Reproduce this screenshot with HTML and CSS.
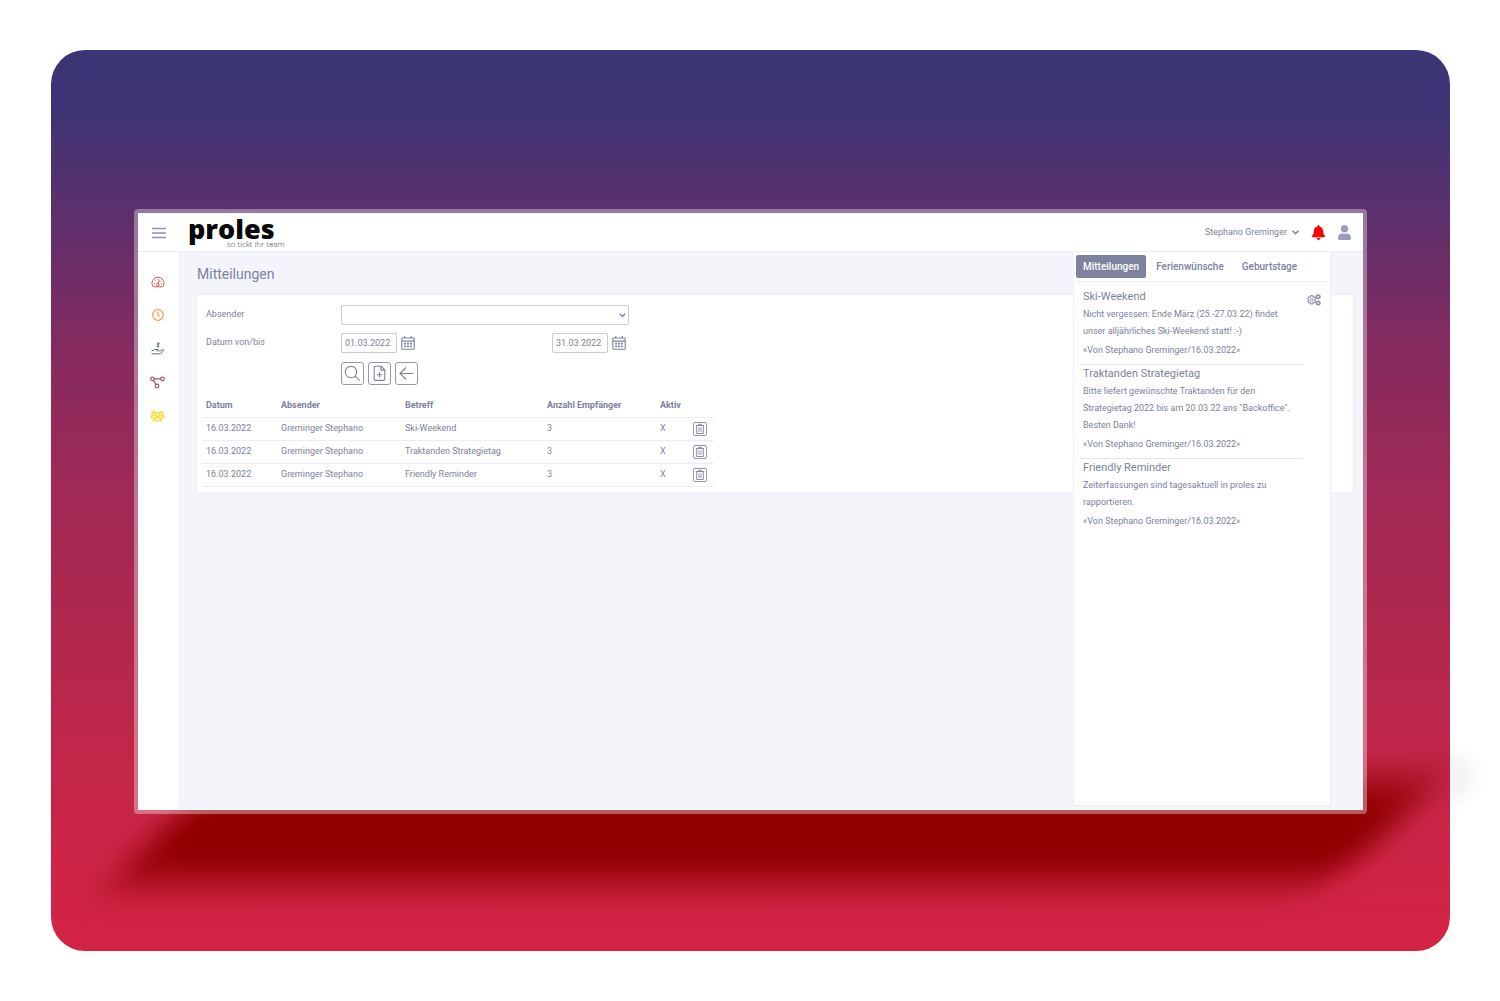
FILE: index.html
```html
<!DOCTYPE html>
<html lang="de">
<head>
<meta charset="utf-8">
<title>proles – Mitteilungen</title>
<meta name="viewport" content="width=device-width, initial-scale=1">
<link rel="stylesheet" href="styles.css">
</head>
<body>
<svg class="sprite" aria-hidden="true">
  <symbol id="i-calendar" viewBox="0 0 14 16">
    <path fill="none" stroke="currentColor" stroke-width="1.1" d="M1.6 3h10.8q.8 0 .8.8v9.6q0 .9-.9.9H1.7q-.9 0-.9-.9V3.8q0-.8.8-.8zM1 6.1h12M3.8 1v2.5M10.2 1v2.5"/>
    <path fill="currentColor" d="M3.2 7.8h1.9v1.7H3.2zM6 7.8h1.9v1.7H6zM8.9 7.8h1.9v1.7H8.9zM3.2 10.6h1.9v1.7H3.2zM6 10.6h1.9v1.7H6zM8.9 10.6h1.9v1.7H8.9z"/>
  </symbol>
  <symbol id="i-trash" viewBox="0 0 10 12">
    <path fill="none" stroke="currentColor" stroke-width=".9" d="M.8 2.5h8.400M3.500 2.300V1.300h3v1M1.700 2.700v7.800h6.600V2.700"/>
    <path fill="none" stroke="currentColor" stroke-width=".8" d="M4 4.300v4.700M6 4.300v4.700"/>
  </symbol>
</svg>
<div class="stage">
<div class="backdrop">
  <div class="shade-clip"><div class="shade"></div></div>
  <div class="halo"></div>
  <div class="window">
    <header class="topbar">
      <button class="plain menu" aria-label="Menü"><svg width="14" height="14" viewBox="0 0 14 14"><path stroke="currentColor" stroke-width="1.7" d="M0 3.500h14M0 8h14M0 12.500h14"/></svg></button>
      <a class="brand" href="#"><span class="brand-name">proles</span><span class="brand-claim">so tickt ihr team</span></a>
      <div class="account">
        <button class="plain user">Stephano Greminger <svg width="7" height="5" viewBox="0 0 7 5"><path fill="none" stroke="currentColor" stroke-width="1.6" d="M.6.8l2.900 2.900L6.400.8"/></svg></button>
        <button class="plain bell" aria-label="Benachrichtigungen"><svg width="13" height="15" viewBox="0 0 448 512"><path fill="currentColor" d="M224 512c35.300 0 64-28.700 64-64H160c0 35.300 28.700 64 64 64zm215.400-149.700c-19.300-20.800-55.500-52-55.500-154.300 0-77.700-54.500-139.900-127.900-155.200V32c0-17.700-14.300-32-32-32s-32 14.300-32 32v20.800C118.600 68.100 64.100 130.300 64.100 208c0 102.300-36.200 133.500-55.500 154.300C2.600 368.700 0 376.500 0 384c.1 16.400 13 32 32.100 32h383.800c19.100 0 32-15.600 32.100-32 0-7.500-2.600-15.300-8.600-21.700z"/></svg></button>
        <button class="plain person" aria-label="Profil"><svg width="13" height="15" viewBox="0 0 448 512"><path fill="currentColor" d="M224 256c70.700 0 128-57.300 128-128S294.700 0 224 0 96 57.300 96 128s57.300 128 128 128zm89.600 32h-16.700c-22.200 10.200-46.900 16-72.900 16s-50.600-5.800-72.900-16h-16.700C60.200 288 0 348.200 0 422.400V464c0 26.500 21.500 48 48 48h352c26.500 0 48-21.500 48-48v-41.600c0-74.200-60.200-134.400-134.400-134.400z"/></svg></button>
      </div>
    </header>
    <div class="body">
      <nav class="rail" aria-label="Hauptnavigation">
        <a class="red" href="#" aria-label="Dashboard"><svg width="14" height="12" viewBox="0 0 14 12"><g fill="none" stroke="currentColor"><path d="M2.200 10.800A6 6 0 1 1 11.800 10.800z"/><circle cx="6.800" cy="8.600" r="1.300"/><path d="M7.200 7.400L8.400 3.600M3 7.800h1M10 7.800h1M4.200 4.400l.7.700M6.200 2.900v.8M9.700 4.900l.6-.5"/></g></svg></a>
        <a class="orange" href="#" aria-label="Zeiterfassung"><svg width="12" height="12" viewBox="0 0 12 12"><g fill="none" stroke="currentColor" stroke-width="1.200"><circle cx="6" cy="6" r="5.300"/><path d="M6 2.600V6.200l2.200 1.700"/></g></svg></a>
        <a class="green" href="#" aria-label="Spesen"><svg width="14" height="13" viewBox="0 0 14 13"><g fill="none" stroke="currentColor"><path d="M8.800 1.900C6.800.7 5 2.300 6.700 3s1.900 2.100-1.100 1.300M7.200.2v5.400"/><path d="M.5 8.500h1.700l1.400-1h3.600q1.300.6 0 1.500H5.500M8.500 9.300l3-1.700q1.700-.2.900 1L9.500 11.800H.5"/></g></svg></a>
        <a class="plum" href="#" aria-label="Projekte"><svg width="15" height="13" viewBox="0 0 15 13"><g fill="none" stroke="currentColor" stroke-width="1.200"><circle cx="2.500" cy="2.800" r="1.800"/><circle cx="12.500" cy="2.800" r="1.800"/><circle cx="7" cy="10" r="1.800"/><path d="M4.300 2.800h6.400M3.500 4.300l2.400 4.200"/></g></svg></a>
        <a class="yellow" href="#" aria-label="Team"><svg width="15" height="12" viewBox="0 0 15 12"><g fill="none" stroke="currentColor" stroke-width="1.500"><circle cx="7.500" cy="4.600" r="2"/><circle cx="3.200" cy="2.600" r="1.300"/><circle cx="11.800" cy="2.600" r="1.300"/><path d="M3.500 10.600q0-2.800 2.500-2.800h3q2.500 0 2.500 2.800zM.8 7.500q0-2 1.800-2h1.800M14.200 7.500q0-2-1.800-2h-1.800M1 7.400h2.500M11.500 7.400H14"/></g></svg></a>
      </nav>
      <main class="main">
        <h1>Mitteilungen</h1>
        <section class="card">
          <form class="filter">
            <label for="absender">Absender</label>
            <div class="select-wrap">
              <select id="absender"><option></option></select>
              <svg width="7" height="5" viewBox="0 0 7 5"><path fill="none" stroke="currentColor" stroke-width="1.5" d="M.8.8l2.700 2.700L6.200.8"/></svg>
            </div>
            <label for="von">Datum von/bis</label>
            <div class="dates">
              <span class="date"><input id="von" type="text" value="01.03.2022"><button type="button" class="plain" aria-label="Datum von wählen"><svg width="14" height="16"><use href="#i-calendar"/></svg></button></span>
              <span class="date"><input type="text" aria-label="Datum bis" value="31.03.2022"><button type="button" class="plain" aria-label="Datum bis wählen"><svg width="14" height="16"><use href="#i-calendar"/></svg></button></span>
            </div>
            <div class="actions">
              <button type="button" class="tool" aria-label="Suchen"><svg width="17" height="17" viewBox="0 0 17 17"><g fill="none" stroke="currentColor" stroke-width="1.1"><circle cx="7" cy="7" r="5.700"/><path d="M11.200 11.200l4.600 4.400"/></g></svg></button>
              <button type="button" class="tool" aria-label="Neu"><svg width="17" height="17" viewBox="0 0 17 17"><g fill="none" stroke="currentColor" stroke-width="1.1"><path d="M4.500 1.300h5.700l3.600 3.600v9.300q0 1.200-1.200 1.200H4.400q-1.200 0-1.200-1.200V2.500q0-1.200 1.300-1.200zM10 1.500v3.600h3.700M8.500 7v5.600M5.700 9.800h5.600"/></g></svg></button>
              <button type="button" class="tool" aria-label="Zurück"><svg width="17" height="17" viewBox="0 0 17 17"><path fill="none" stroke="currentColor" stroke-width="1.1" d="M15 8.500H2.300M8 2.500l-6 6 6 6"/></svg></button>
            </div>
          </form>
          <table>
            <colgroup><col class="c1"><col class="c2"><col class="c3"><col class="c4"><col class="c5"><col class="c6"></colgroup>
            <thead><tr><th>Datum</th><th>Absender</th><th>Betreff</th><th>Anzahl Empfänger</th><th>Aktiv</th><td></td></tr></thead>
            <tbody>
              <tr><td>16.03.2022</td><td>Greminger Stephano</td><td>Ski-Weekend</td><td>3</td><td>X</td><td><button class="trash" aria-label="Löschen"><svg width="10" height="12"><use href="#i-trash"/></svg></button></td></tr>
              <tr><td>16.03.2022</td><td>Greminger Stephano</td><td>Traktanden Strategietag</td><td>3</td><td>X</td><td><button class="trash" aria-label="Löschen"><svg width="10" height="12"><use href="#i-trash"/></svg></button></td></tr>
              <tr><td>16.03.2022</td><td>Greminger Stephano</td><td>Friendly Reminder</td><td>3</td><td>X</td><td><button class="trash" aria-label="Löschen"><svg width="10" height="12"><use href="#i-trash"/></svg></button></td></tr>
            </tbody>
          </table>
        </section>
      </main>
      <aside class="panel">
        <div class="tabs">
          <button class="tab active">Mitteilungen</button>
          <button class="tab">Ferienwünsche</button>
          <button class="tab">Geburtstage</button>
        </div>
        <div class="feed">
          <div class="notes">
            <article><h2>Ski-Weekend</h2><p>Nicht vergessen: Ende März (25.-27.03.22) findet unser alljährliches Ski-Weekend statt! :-)</p><p class="by">«Von Stephano Greminger/16.03.2022»</p></article>
            <article><h2>Traktanden Strategietag</h2><p>Bitte liefert gewünschte Traktanden für den Strategietag 2022 bis am 20.03.22 ans "Backoffice". Besten Dank!</p><p class="by">«Von Stephano Greminger/16.03.2022»</p></article>
            <article><h2>Friendly Reminder</h2><p>Zeiterfassungen sind tagesaktuell in proles zu rapportieren.</p><p class="by">«Von Stephano Greminger/16.03.2022»</p></article>
          </div>
          <button class="plain gears" aria-label="Einstellungen"><svg width="14" height="12" viewBox="0 0 14 12"><g fill="none" stroke="currentColor"><path stroke-width="1.200" d="M3.900 1.700h1.600l.4 1 .9.500 1-.2.800 1.300-.7.900v1.200l.7.900-.8 1.300-1-.2-.9.500-.4 1H3.900l-.4-1-.9-.5-1 .2L.8 7.300l.7-.9V5.200l-.7-.9L1.600 3l1 .2.900-.5z"/><circle cx="4.700" cy="5.800" r="1.400"/><circle cx="11.200" cy="2.800" r="1.700" stroke-width="1.700"/><circle cx="11.200" cy="9" r="1.700" stroke-width="1.700"/></g></svg></button>
        </div>
      </aside>
    </div>
  </div>
</div>
</div>
</body>
</html>
```

FILE: styles.css
```css
* { box-sizing: border-box; }
body {
  margin: 0;
  background: #fff;
  color: #7c819d;
  font: 9px/17px Roboto, "Liberation Sans", sans-serif;
}
h1, h2, p { margin: 0; font-weight: 400; }
svg { display: block; }
button, input, select { font: inherit; color: inherit; }
a { color: inherit; text-decoration: none; }
.sprite { position: absolute; width: 0; height: 0; }
.plain { padding: 0; border: 0; background: none; }

.stage { display: flex; min-height: 100vh; padding: 50px 50px 50px 51px; overflow: hidden; }
.backdrop {
  position: relative;
  display: flex;
  flex: 1;
  min-width: 0;
  padding: 159px 83px 137px;
  border-radius: 34px;
  background: linear-gradient(#3b3575 0, #3d3475 6%, #612f6b 20%, #822b60 32%, #9f2956 48%, #ae284f 62%, #c32649 80%, #d02446 92%, #d42445 100%);
}

/* slanted shadow cast below the window */
.shade-clip { position: absolute; inset: 0; overflow: hidden; border-radius: 34px; }
.shade { position: absolute; left: 109px; right: 64px; bottom: 68px; height: 102px; border-radius: 20px; background: #900000; transform: skewX(-45deg); filter: blur(19px); }
.halo { position: absolute; right: -24px; bottom: 150px; width: 44px; height: 48px; border-radius: 50%; background: #667; opacity: .07; filter: blur(8px); z-index: -1; }

.window {
  position: relative;
  display: flex;
  flex-direction: column;
  flex: 1;
  min-width: 0;
  border: 4px solid rgba(255, 255, 255, .35);
  border-radius: 4px;
  background: #f4f5fa;
  background-clip: padding-box;
}
.topbar {
  display: flex;
  align-items: center;
  height: 39px;
  padding: 0 12px 0 14px;
  border-bottom: 1px solid #e9eef6;
  background: #fff;
}
.menu { color: #8d93b5; }
.brand { display: flex; flex-direction: column; margin-left: 22px; color: #080808; }
.brand-name { font: 800 27px/26px "Open Sans", sans-serif; }
.brand-claim { align-self: flex-end; margin: -2px -10px 0 0; color: #333; font: 300 8px/8px "Open Sans", sans-serif; }
.account { display: flex; align-items: center; gap: 13px; margin-left: auto; }
.user { display: flex; align-items: center; gap: 5px; }
.bell { color: #f00; }
.person { color: #989dbc; }

.body { position: relative; display: flex; flex: 1; }
.rail {
  display: flex;
  flex-direction: column;
  align-items: center;
  gap: 21px;
  width: 42px;
  padding: 24px 2px 0 0;
  border-right: 1px solid #eceff6;
  background: #fff;
}
.red { color: #d0515f; }
.orange { color: #f79a4b; }
.green { color: #62786b; }
.plum { color: #94566e; }
.yellow { color: #f7df3a; }

.main { flex: 1; min-width: 0; padding: 12px 9px 0 16px; }
h1 { padding-left: 1px; font-size: 14px; line-height: 20px; }
.card {
  margin-top: 10px;
  padding: 10px 5px 5px;
  border: 1px solid #ebeff7;
  border-radius: 3px;
  background: #fff;
}
.filter {
  display: grid;
  grid-template-columns: 135px 288px;
  row-gap: 8px;
  padding-left: 4px;
}
.filter label { line-height: 18px; }
.select-wrap { position: relative; }
.select-wrap svg { position: absolute; right: 3px; top: 8px; pointer-events: none; }
select, input { height: 20px; border: 1px solid #c9cbd6; border-radius: 2px; background: #fff; }
select { display: block; width: 100%; appearance: none; }
input { width: 56px; padding: 0 3px; }
.dates { display: flex; justify-content: space-between; }
.date { display: flex; align-items: center; gap: 4px; margin-right: 3px; }
.actions { display: flex; grid-column: 2; gap: 4px; padding-top: 1px; }
.tool {
  display: grid;
  place-items: center;
  width: 23px;
  height: 23px;
  padding: 0;
  border: 1px solid #9598ae;
  border-radius: 3px;
  background: #fff;
}

table { width: 512px; margin-top: 9px; border-collapse: collapse; table-layout: fixed; }
th, td { height: 23px; padding: 0 4px; border-bottom: 1px solid #e9eff8; text-align: left; }
th { font-weight: 700; }
.c1 { width: 75px; }
.c2 { width: 124px; }
.c3 { width: 142px; }
.c4 { width: 113px; }
.c5 { width: 33px; }
.trash {
  display: grid;
  place-items: center;
  width: 14px;
  height: 14px;
  padding: 0;
  border: 1px solid #9598ae;
  border-radius: 2px;
  background: #fff;
}

/* message drawer, lies over the page content */
.panel {
  position: absolute;
  top: 0;
  right: 32px;
  bottom: 4px;
  width: 258px;
  border: 1px solid #ebeff7;
  border-top: 0;
  background: #fff;
}
.tabs {
  display: flex;
  gap: 2px;
  margin: 0 3px 0 2px;
  padding: 3px 0;
  border-bottom: 1px solid #ebeff7;
}
.tab { height: 23px; padding: 0 8px; border: 0; border-radius: 2px; background: none; font-size: 10px; font-weight: 500; line-height: 21px; }
.active { padding: 0 7px; background: #7e829f; color: #fff; }
.feed { display: flex; align-items: flex-start; padding: 6px 9px 0 6px; }
.notes { flex: 1; padding-right: 4px; }
.notes article { padding: 0 0 5px 3px; border-bottom: 1px solid #e3e5ea; }
.notes article:last-child { border: 0; }
.notes p { padding-right: 4px; }
h2 { font-size: 11px; line-height: 18px; }
.notes .by { padding-top: 2px; }
.gears { margin-top: 6px; color: #9295ab; }
```
